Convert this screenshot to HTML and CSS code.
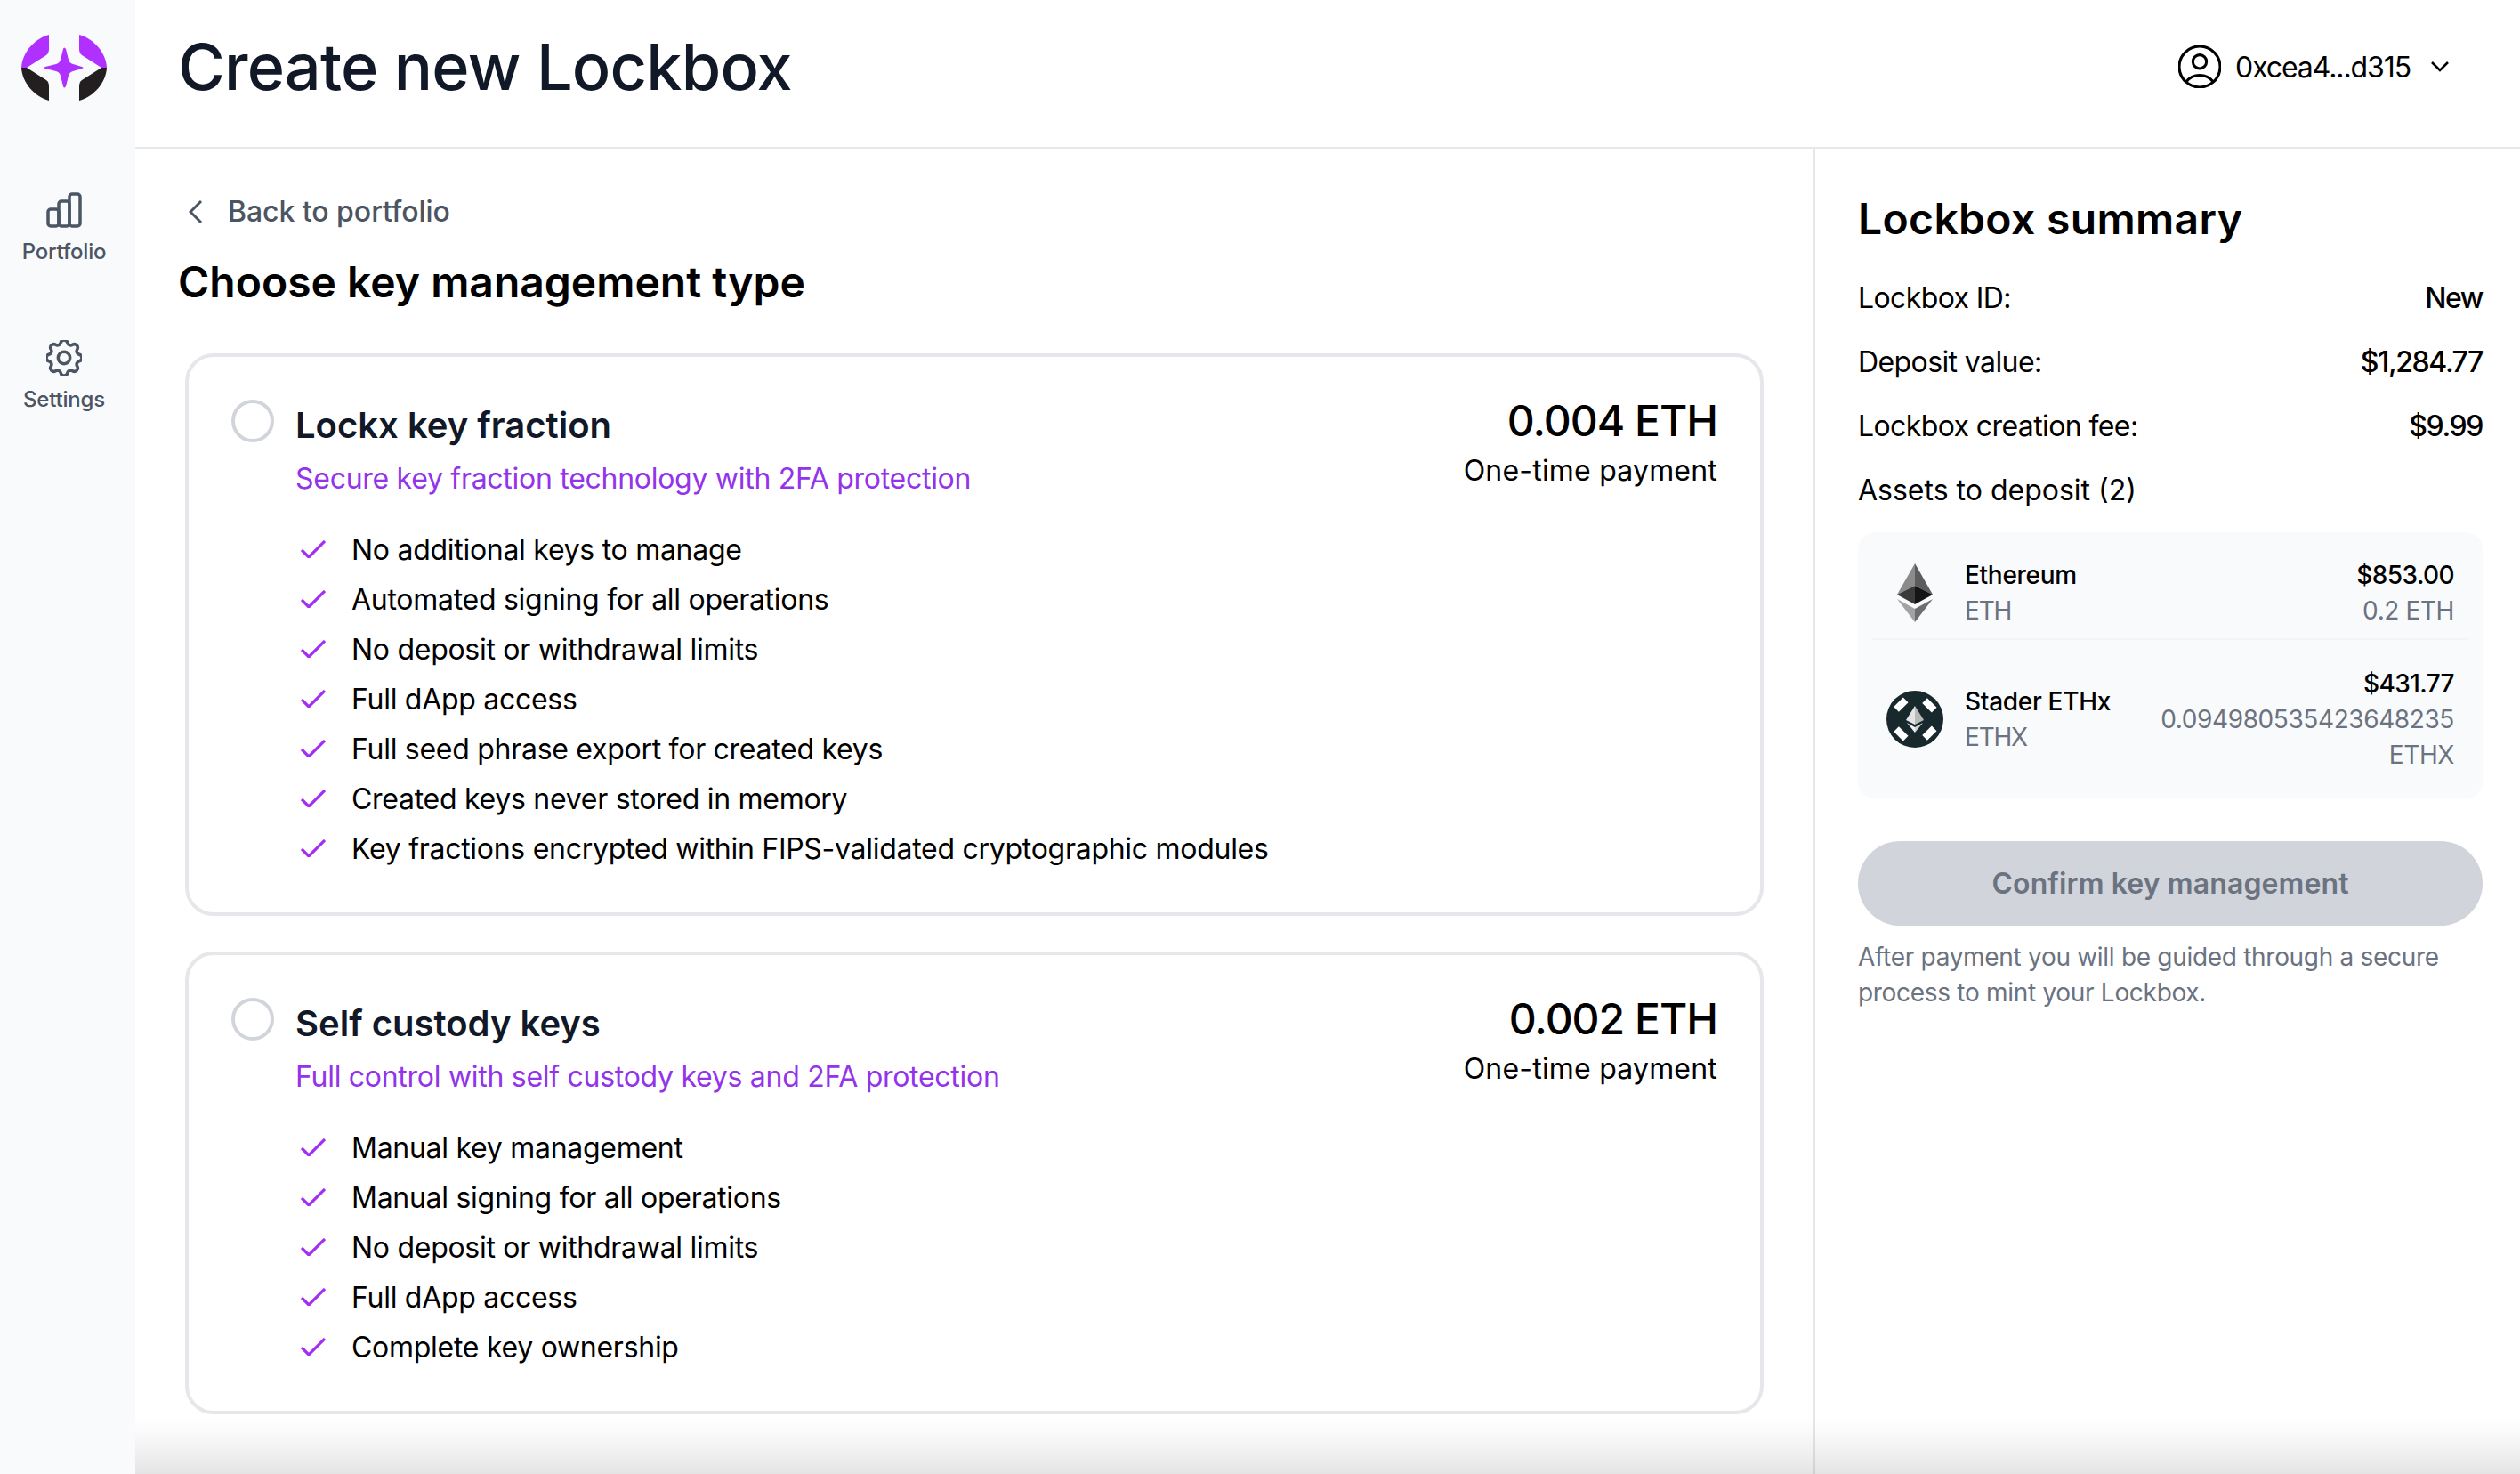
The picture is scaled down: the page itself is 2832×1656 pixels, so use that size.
FILE: index.html
```html
<!DOCTYPE html>
<html lang="en">
<head>
  <meta charset="UTF-8" />
  <meta name="viewport" content="width=device-width, initial-scale=1.0" />
  <title>Create new Lockbox</title>
  <link rel="stylesheet" href="styles.css">
</head>
<body>
<div class="app">
  <!-- Sidebar -->
  <aside class="sidebar">
    <svg class="logo" viewBox="0 0 96 74" width="96" height="74">
      <path fill="#b030ff" d="M31 0C14 5 1 20 0 37H6L28 23Q31 21 31 16Z"/>
      <path fill="#b030ff" d="M65 0C82 5 95 20 96 37H90L68 23Q65 21 65 16Z"/>
      <path fill="#231f20" d="M31 74C14 69 1 54 0 37H6L28 51Q31 53 31 58Z"/>
      <path fill="#231f20" d="M65 74C82 69 95 54 96 37H90L68 51Q65 53 65 58Z"/>
      <path fill="#b030ff" d="M47 16Q48 13 50 16L53 28Q54 32 58 33L68 36Q71 37 68 38L58 41Q54 42 53 46L50 58Q48 61 47 58L44 46Q43 42 39 41L27 38Q24 37 27 36L39 33Q43 32 44 28Z"/>
    </svg>
    <a class="nav-item nav-first">
      <svg class="nav-icon" viewBox="0 0 40 40" width="40" height="40">
        <rect x="2" y="19" width="12" height="19" rx="3"/>
        <rect x="14" y="10" width="12" height="28" rx="3"/>
        <rect x="26" y="2" width="12" height="36" rx="3"/>
      </svg>
      <span>Portfolio</span>
    </a>
    <a class="nav-item">
      <svg class="nav-icon" viewBox="3 3 18 18" width="40" height="40">
        <path class="gear" d="M10.325 4.317c.426-1.756 2.924-1.756 3.35 0a1.724 1.724 0 002.573 1.066c1.543-.94 3.31.826 2.37 2.37a1.724 1.724 0 001.065 2.572c1.756.426 1.756 2.924 0 3.35a1.724 1.724 0 00-1.066 2.573c.94 1.543-.826 3.31-2.37 2.37a1.724 1.724 0 00-2.572 1.065c-.426 1.756-2.924 1.756-3.35 0a1.724 1.724 0 00-2.573-1.066c-1.543.94-3.31-.826-2.37-2.37a1.724 1.724 0 00-1.065-2.572c-1.756-.426-1.756-2.924 0-3.35a1.724 1.724 0 001.066-2.573c-.94-1.543.826-3.31 2.37-2.37.996.608 2.296.07 2.572-1.065z"/>
        <circle class="gear" cx="12" cy="12" r="3"/>
      </svg>
      <span>Settings</span>
    </a>
  </aside>

  <div class="page">
    <header class="topbar">
      <h1>Create new Lockbox</h1>
      <div class="account">
        <svg viewBox="2.6 2.6 18.8 18.8" width="48" height="48" fill="none" stroke="#000" stroke-width="1.2">
          <path d="M17.982 18.725A7.488 7.488 0 0012 15.75a7.488 7.488 0 00-5.982 2.975m11.964 0a9 9 0 10-11.963 0m11.963 0A8.966 8.966 0 0112 21a8.966 8.966 0 01-5.982-2.275M15 9.75a3 3 0 11-6 0 3 3 0 016 0z"/>
        </svg>
        <span class="address">0xcea4...d315</span>
        <svg class="account-chevron" viewBox="0 0 20 12" width="20" height="12" fill="none" stroke="#000" stroke-width="2.6">
          <path d="M1 1l9 9 9-9"/>
        </svg>
      </div>
    </header>

    <div class="columns">
      <main class="choose">
        <a class="back">
          <svg viewBox="0 0 16 26" width="16" height="26" fill="none" stroke="#4b5563" stroke-width="3">
            <path d="M14 1L2 13l12 12"/>
          </svg>
          <span>Back to portfolio</span>
        </a>
        <h2 class="choose-title">Choose key management type</h2>

        <div class="cards">
          <!-- Lockx -->
          <section class="card">
            <div class="card-head">
              <span class="radio"></span>
              <div class="card-name">
                <h3>Lockx key fraction</h3>
                <p class="tagline">Secure key fraction technology with 2FA protection</p>
              </div>
              <div class="price">
                <div class="price-value">0.004 ETH</div>
                <div class="price-note">One-time payment</div>
              </div>
            </div>
            <ul class="features">
              <li><svg viewBox="0 0 28 20" width="28" height="20"><path d="M1 11l8 8L27 1"/></svg>No additional keys to manage</li>
              <li><svg viewBox="0 0 28 20" width="28" height="20"><path d="M1 11l8 8L27 1"/></svg>Automated signing for all operations</li>
              <li><svg viewBox="0 0 28 20" width="28" height="20"><path d="M1 11l8 8L27 1"/></svg>No deposit or withdrawal limits</li>
              <li><svg viewBox="0 0 28 20" width="28" height="20"><path d="M1 11l8 8L27 1"/></svg>Full dApp access</li>
              <li><svg viewBox="0 0 28 20" width="28" height="20"><path d="M1 11l8 8L27 1"/></svg>Full seed phrase export for created keys</li>
              <li><svg viewBox="0 0 28 20" width="28" height="20"><path d="M1 11l8 8L27 1"/></svg>Created keys never stored in memory</li>
              <li><svg viewBox="0 0 28 20" width="28" height="20"><path d="M1 11l8 8L27 1"/></svg>Key fractions encrypted within FIPS-validated cryptographic modules</li>
            </ul>
          </section>

          <!-- Self custody -->
          <section class="card">
            <div class="card-head">
              <span class="radio"></span>
              <div class="card-name">
                <h3>Self custody keys</h3>
                <p class="tagline">Full control with self custody keys and 2FA protection</p>
              </div>
              <div class="price">
                <div class="price-value">0.002 ETH</div>
                <div class="price-note">One-time payment</div>
              </div>
            </div>
            <ul class="features">
              <li><svg viewBox="0 0 28 20" width="28" height="20"><path d="M1 11l8 8L27 1"/></svg>Manual key management</li>
              <li><svg viewBox="0 0 28 20" width="28" height="20"><path d="M1 11l8 8L27 1"/></svg>Manual signing for all operations</li>
              <li><svg viewBox="0 0 28 20" width="28" height="20"><path d="M1 11l8 8L27 1"/></svg>No deposit or withdrawal limits</li>
              <li><svg viewBox="0 0 28 20" width="28" height="20"><path d="M1 11l8 8L27 1"/></svg>Full dApp access</li>
              <li><svg viewBox="0 0 28 20" width="28" height="20"><path d="M1 11l8 8L27 1"/></svg>Complete key ownership</li>
            </ul>
          </section>
        </div>
      </main>

      <aside class="summary">
        <h2 class="summary-title">Lockbox summary</h2>
        <div class="summary-rows">
          <div class="summary-row"><span>Lockbox ID:</span><b>New</b></div>
          <div class="summary-row"><span>Deposit value:</span><b>$1,284.77</b></div>
          <div class="summary-row"><span>Lockbox creation fee:</span><b>$9.99</b></div>
          <div class="summary-row summary-assets"><span>Assets to deposit (2)</span></div>
        </div>

        <div class="assets">
          <div class="asset asset-first">
            <div class="asset-icon">
              <svg viewBox="0 0 40 66" width="40" height="66">
                <polygon fill="#8b8b8b" points="20,0 0,35 20,25"/>
                <polygon fill="#5c5c5c" points="20,0 40,35 20,25"/>
                <polygon fill="#3a3a3a" points="20,25 0,35 20,46"/>
                <polygon fill="#151515" points="20,25 40,35 20,46"/>
                <polygon fill="#a3a3a3" points="0,40 20,51 20,66"/>
                <polygon fill="#6e6e6e" points="40,40 20,51 20,66"/>
              </svg>
            </div>
            <div class="asset-name"><div>Ethereum</div><div class="muted">ETH</div></div>
            <div class="asset-value"><div>$853.00</div><div class="muted">0.2 ETH</div></div>
          </div>
          <div class="asset">
            <div class="asset-icon">
              <svg viewBox="0 0 64 64" width="64" height="64">
                <circle cx="32" cy="32" r="32" fill="#17292d"/>
                <g fill="#fff">
                  <rect x="9" y="12" width="15" height="8" transform="rotate(-45 16 16)"/>
                  <rect x="41" y="12" width="15" height="8" transform="rotate(45 48 16)"/>
                  <rect x="9" y="44" width="15" height="8" transform="rotate(45 16 48)"/>
                  <rect x="41" y="44" width="15" height="8" transform="rotate(-45 48 48)"/>
                </g>
                <polygon fill="#e4e4e4" points="32,17 22,33 32,38"/>
                <polygon fill="#b9b9b9" points="32,17 42,33 32,38"/>
                <polygon fill="#f2f2f2" points="23,36 32,41 32,47"/>
                <polygon fill="#d5d5d5" points="41,36 32,41 32,47"/>
              </svg>
            </div>
            <div class="asset-name"><div>Stader ETHx</div><div class="muted">ETHX</div></div>
            <div class="asset-value"><div>$431.77</div><div class="muted">0.094980535423648235 ETHX</div></div>
          </div>
        </div>

        <button class="confirm" disabled>Confirm key management</button>
        <p class="hint">After payment you will be guided through a secure process to mint your Lockbox.</p>
      </aside>
    </div>
    <div class="bottom-fade"></div>
  </div>
</div>
</body>
</html>
```

FILE: styles.css
```css
* {
  box-sizing: border-box;
}

html, body {
  height: 100%;
}

body {
  margin: 0;
  background: #fff;
  color: #000;
  font-family: Inter, "Liberation Sans", sans-serif;
  font-size: 32px;
  line-height: 48px;
  overflow: hidden;
}

h1, h2, h3, p, ul {
  margin: 0;
  padding: 0;
}

.app {
  display: flex;
  height: 1656px;
}

/* sidebar */
.sidebar {
  width: 152px;
  flex-shrink: 0;
  background: #f9fafb;
  display: flex;
  flex-direction: column;
  align-items: center;
  padding: 39px 8px 0 0;
}

.nav-item {
  display: flex;
  flex-direction: column;
  align-items: center;
  color: #4b5563;
  font-size: 24px;
  line-height: 32px;
  font-weight: 500;
  letter-spacing: -.2px;
  gap: 11px;
  margin-top: 83px;
}

.nav-first {
  margin-top: 103px;
}

.nav-icon {
  fill: none;
  stroke: #4b5563;
  stroke-width: 3.5;
}

.nav-icon .gear {
  stroke-width: 1.6;
}

/* page */
.page {
  flex: 1;
  display: flex;
  flex-direction: column;
  position: relative;
  min-width: 0;
}

.topbar {
  height: 167px;
  flex-shrink: 0;
  border-bottom: 2px solid #e5e7eb;
  display: flex;
  align-items: center;
  justify-content: space-between;
  padding: 0 80px 16px 48px;
}

.topbar h1 {
  font-size: 72px;
  line-height: 80px;
  font-weight: 500;
  letter-spacing: -.8px;
  color: #111827;
}

.account {
  display: flex;
  align-items: center;
}

.address {
  margin: 2px 0 0 16px;
  font-size: 32px;
  letter-spacing: -1.1px;
}

.account-chevron {
  margin-left: 23px;
}

.columns {
  flex: 1;
  display: flex;
  min-height: 0;
}

.choose {
  width: 1886px;
  flex-shrink: 0;
  padding: 47px 56px 0 48px;
}

.back {
  display: flex;
  align-items: center;
  gap: 28px;
  padding-left: 12px;
  color: #4b5563;
  font-weight: 500;
  letter-spacing: -.05px;
}

.choose-title {
  margin-top: 23px;
  font-size: 48px;
  line-height: 64px;
  font-weight: 600;
}

.cards {
  margin: 48px 0 0 8px;
  display: flex;
  flex-direction: column;
  gap: 40px;
}

.card {
  border: 4px solid #e5e7eb;
  border-radius: 32px;
  padding: 48px 48px 47px;
}

.card-head {
  display: flex;
  align-items: flex-start;
}

.radio {
  width: 48px;
  height: 48px;
  border: 4px solid #d1d5db;
  border-radius: 50%;
  flex-shrink: 0;
}

.card-name {
  flex: 1;
  margin-left: 24px;
}

.card-name h3 {
  margin-top: 1px;
  margin-bottom: -1px;
  font-size: 40px;
  line-height: 56px;
  font-weight: 600;
  color: #111827;
}

.tagline {
  margin-top: 9px;
  color: #9333ea;
  letter-spacing: -.28px;
}

.price {
  text-align: right;
}

.price-value {
  font-size: 48px;
  font-weight: 500;
  letter-spacing: -1px;
}

.price-note {
  margin-top: 8px;
  letter-spacing: .2px;
}

.features {
  list-style: none;
  margin: 32px 0 0 78px;
  display: flex;
  flex-direction: column;
  gap: 8px;
  letter-spacing: -.28px;
}

.features li {
  display: flex;
  align-items: center;
  gap: 29px;
}

.features svg {
  margin-top: -2px;
  fill: none;
  stroke: #a42df5;
  stroke-width: 3.2;
  flex-shrink: 0;
}

/* summary */
.summary {
  flex: 1;
  border-left: 2px solid #e5e7eb;
  padding: 47px 42px 0 48px;
}

.summary-title {
  font-size: 48px;
  line-height: 64px;
  font-weight: 600;
  letter-spacing: .35px;
}

.summary-rows {
  margin-top: 33px;
  display: flex;
  flex-direction: column;
  gap: 24px;
  letter-spacing: -.6px;
}

.summary-assets {
  letter-spacing: 0;
}

.summary-row {
  display: flex;
  justify-content: space-between;
}

.summary-row b {
  font-weight: 500;
  letter-spacing: -1.4px;
}

.assets {
  margin-top: 23px;
  background: #f9fafb;
  border-radius: 20px;
  padding: 0 16px;
  font-size: 28px;
  line-height: 40px;
  font-weight: 500;
  box-shadow: 0 1px 2px rgba(0, 0, 0, .03);
}

.asset {
  display: flex;
  align-items: center;
  padding: 29px 16px 28px;
}

.asset-first {
  padding: 28px 16px 11px;
  border-bottom: 2px solid #f3f4f6;
}

.asset-icon {
  width: 64px;
  flex-shrink: 0;
  margin-right: 24px;
  display: flex;
  justify-content: center;
}

.asset-name {
  white-space: nowrap;
  letter-spacing: -.3px;
}

.asset-name .muted {
  letter-spacing: -1.2px;
}

.asset-value {
  flex: 1;
  text-align: right;
  margin-left: 32px;
  letter-spacing: -.6px;
}

.muted {
  color: #6b7280;
  font-weight: 400;
  letter-spacing: -.4px;
}

.confirm {
  display: block;
  width: 100%;
  height: 95px;
  margin-top: 49px;
  border: none;
  border-radius: 48px;
  background: #d1d5db;
  color: #6b7280;
  font-family: inherit;
  font-size: 32px;
  font-weight: 600;
  letter-spacing: .1px;
}

.hint {
  margin-top: 15px;
  font-size: 28px;
  line-height: 40px;
  letter-spacing: -.3px;
  color: #6b7280;
}

.bottom-fade {
  position: absolute;
  left: 0;
  right: 0;
  bottom: 0;
  height: 66px;
  background: linear-gradient(to bottom, rgba(0, 0, 0, 0), rgba(0, 0, 0, .015) 24%, rgba(0, 0, 0, .065) 70%, rgba(0, 0, 0, .105));
}
```
